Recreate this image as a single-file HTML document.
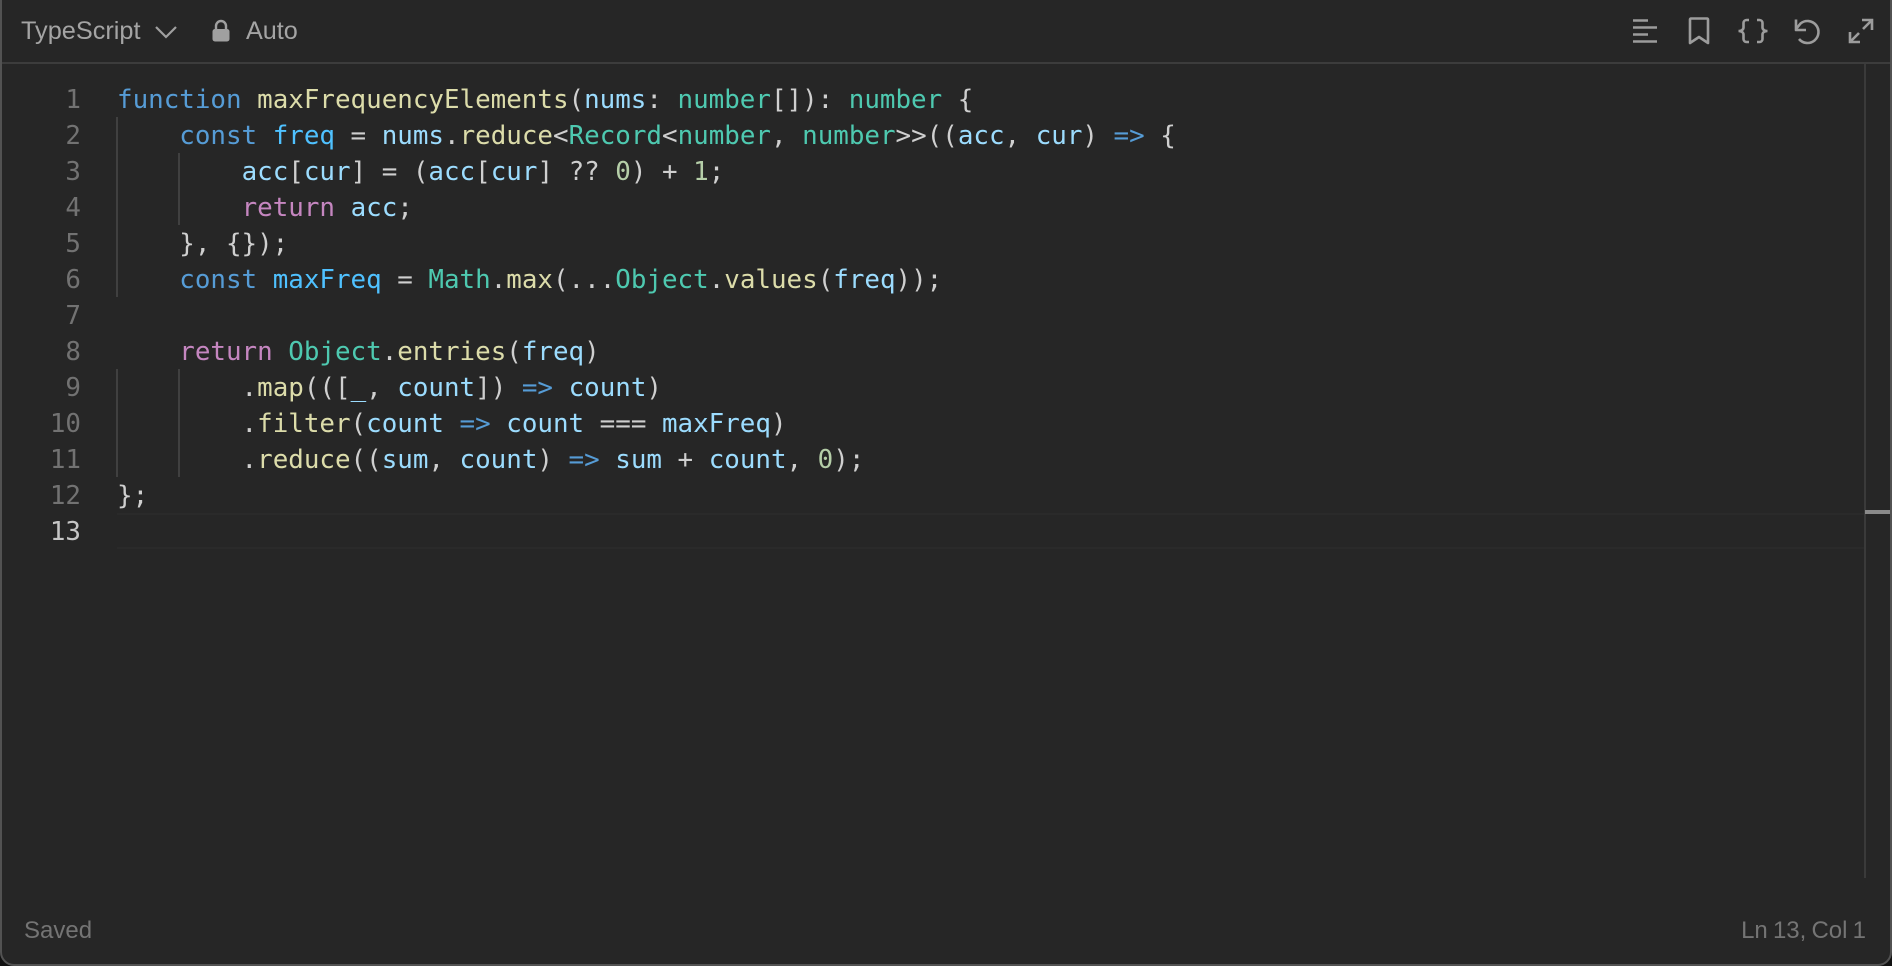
<!DOCTYPE html>
<html><head><meta charset="utf-8"><title>Editor</title>
<style>
html,body{margin:0;padding:0;background:#111;}
body{width:1892px;height:966px;overflow:hidden;position:relative;}
#frame{position:absolute;left:0;top:-20px;width:1892px;height:986px;box-sizing:border-box;background:#262626;border:2px solid #525252;border-radius:14px;}
.a{position:absolute;}
.ui{font-family:"Liberation Sans",sans-serif;white-space:nowrap;filter:blur(.3px);}
.hr{left:2px;top:62px;width:1888px;height:2px;background:#3c3c3c;}
.code{font-family:"DejaVu Sans Mono",monospace;font-size:25.87px;line-height:36px;white-space:pre;color:#cfcfcf;left:117px;filter:blur(.3px);}
.ln{font-family:"DejaVu Sans Mono",monospace;font-size:25.87px;line-height:36px;color:#727272;text-align:right;left:20px;width:61px;filter:blur(.3px);}
.g{width:2px;background:#404040;}
.k{color:#569cd6}.f{color:#dcdcaa}.v{color:#9cdcfe}.t{color:#4ec9b0}.n{color:#b5cea8}.c{color:#c586c0}.o{color:#4fc1ff}
</style></head><body>
<div id="frame"></div>
<div class="a hr"></div>
<div class="a ui" style="left:21px;top:16px;font-size:25.3px;line-height:30px;color:#a4a4a4;">TypeScript</div>
<svg class="a" style="left:154px;top:24px" width="24" height="16" viewBox="0 0 24 16"><path d="M2 3l10 10L22 3" fill="none" stroke="#a0a0a0" stroke-width="2.2"/></svg>
<svg class="a" style="left:210px;top:19px" width="22" height="24" viewBox="0 0 22 24"><path d="M6 11V7a5 5 0 0 1 10 0v4" fill="none" stroke="#a0a0a0" stroke-width="2.4"/><rect x="2.500" y="10" width="17" height="12.500" rx="2.500" fill="#a0a0a0"/></svg>
<div class="a ui" style="left:246px;top:16px;font-size:25.2px;line-height:30px;color:#a4a4a4;">Auto</div>
<svg class="a" style="left:1620px;top:10px" width="272" height="44" viewBox="1620 10 272 44" fill="none" stroke="#9c9c9c" stroke-width="2.6">
<path d="M1633 20.500h15M1633 27.500h24M1633 34.500h15M1633 41.500h24"/>
<path d="M1690 19.500a1 1 0 0 1 1-1h16a1 1 0 0 1 1 1V43l-9-6-9 6z" stroke-linejoin="round"/>
<path d="M1749 20h-2.500a3 3 0 0 0-3 3v4.500c0 2-2 3.500-5 3.500 3 0 5 1.500 5 3.500V39a3 3 0 0 0 3 3h2.500M1757 20h2.500a3 3 0 0 1 3 3v4.500c0 2 2 3.500 5 3.500-3 0-5 1.500-5 3.500V39a3 3 0 0 1-3 3H1757"/>
<path d="M1796 29l4.500-5.500A11 11 0 1 1 1799 39"/>
<path d="M1796 19.500V30h10" stroke-linejoin="round"/>
<path d="M1872 20l-9 9M1862 20h10v10M1850 42l9-9M1850 32v10h10"/>
</svg>
<div class="a g" style="left:116px;top:117px;height:180px;"></div>
<div class="a g" style="left:178px;top:153px;height:72px;"></div>
<div class="a g" style="left:116px;top:369px;height:108px;"></div>
<div class="a g" style="left:178px;top:369px;height:108px;"></div>
<div class="a" style="left:117px;top:513px;width:1747px;height:36px;box-sizing:border-box;border-top:2px solid #2a2a2a;border-bottom:2px solid #2a2a2a;"></div>
<div class="a" style="left:1864px;top:64px;width:2px;height:814px;background:#3a3a3a;"></div>
<div class="a" style="left:1865px;top:510px;width:25px;height:4px;background:#8a8a8a;"></div>
<div class="a ln" style="top:82px">1</div>
<div class="a ln" style="top:118px">2</div>
<div class="a ln" style="top:154px">3</div>
<div class="a ln" style="top:190px">4</div>
<div class="a ln" style="top:226px">5</div>
<div class="a ln" style="top:262px">6</div>
<div class="a ln" style="top:298px">7</div>
<div class="a ln" style="top:334px">8</div>
<div class="a ln" style="top:370px">9</div>
<div class="a ln" style="top:406px">10</div>
<div class="a ln" style="top:442px">11</div>
<div class="a ln" style="top:478px">12</div>
<div class="a ln" style="top:514px;color:#c6c6c6">13</div>
<div class="a code" style="top:82px"><span class="k">function</span> <span class="f">maxFrequencyElements</span>(<span class="v">nums</span>: <span class="t">number</span>[]): <span class="t">number</span> {</div>
<div class="a code" style="top:118px">    <span class="k">const</span> <span class="o">freq</span> = <span class="v">nums</span>.<span class="f">reduce</span>&lt;<span class="t">Record</span>&lt;<span class="t">number</span>, <span class="t">number</span>&gt;&gt;((<span class="v">acc</span>, <span class="v">cur</span>) <span class="k">=&gt;</span> {</div>
<div class="a code" style="top:154px">        <span class="v">acc</span>[<span class="v">cur</span>] = (<span class="v">acc</span>[<span class="v">cur</span>] ?? <span class="n">0</span>) + <span class="n">1</span>;</div>
<div class="a code" style="top:190px">        <span class="c">return</span> <span class="v">acc</span>;</div>
<div class="a code" style="top:226px">    }, {});</div>
<div class="a code" style="top:262px">    <span class="k">const</span> <span class="o">maxFreq</span> = <span class="t">Math</span>.<span class="f">max</span>(...<span class="t">Object</span>.<span class="f">values</span>(<span class="v">freq</span>));</div>
<div class="a code" style="top:334px">    <span class="c">return</span> <span class="t">Object</span>.<span class="f">entries</span>(<span class="v">freq</span>)</div>
<div class="a code" style="top:370px">        .<span class="f">map</span>(([<span class="v">_</span>, <span class="v">count</span>]) <span class="k">=&gt;</span> <span class="v">count</span>)</div>
<div class="a code" style="top:406px">        .<span class="f">filter</span>(<span class="v">count</span> <span class="k">=&gt;</span> <span class="v">count</span> === <span class="v">maxFreq</span>)</div>
<div class="a code" style="top:442px">        .<span class="f">reduce</span>((<span class="v">sum</span>, <span class="v">count</span>) <span class="k">=&gt;</span> <span class="v">sum</span> + <span class="v">count</span>, <span class="n">0</span>);</div>
<div class="a code" style="top:478px">};</div>
<div class="a ui" style="left:24px;top:917px;font-size:24px;line-height:28px;color:#747474;">Saved</div>
<div class="a ui" style="right:26px;top:917px;font-size:24px;line-height:28px;word-spacing:-1.5px;color:#747474;">Ln 13, Col 1</div>
</body></html>
